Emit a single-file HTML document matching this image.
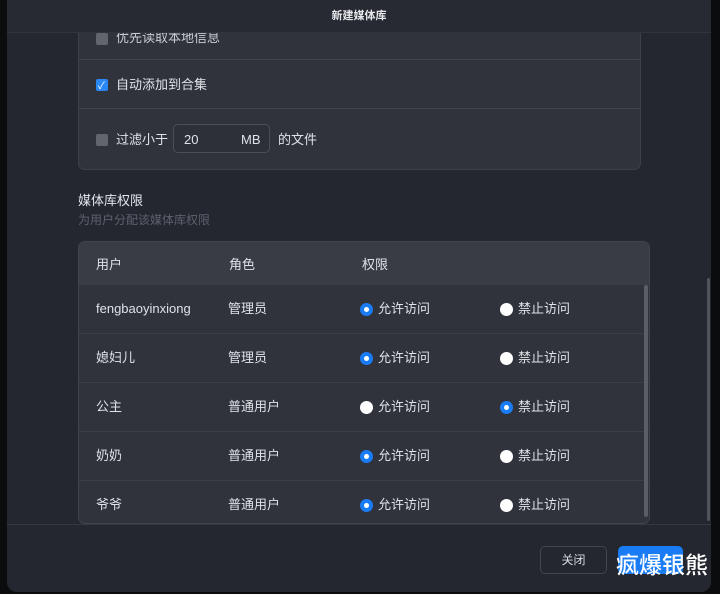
<!DOCTYPE html>
<html><head><meta charset="utf-8"><style>
*{box-sizing:border-box;margin:0;padding:0}
body{width:720px;height:594px;background:#0b0c0e;font-family:"Liberation Sans","Noto Sans CJK SC",sans-serif;color:#d8dbe0;font-size:13px;overflow:hidden;position:relative}
.modal{position:absolute;left:7px;top:0;width:704px;height:592px;background:#242730;border-radius:0 0 10px 10px;overflow:hidden}
.hdr{position:absolute;left:0;top:0;width:100%;height:33px;background:#272a32;border-bottom:1px solid #31343c;text-align:center;line-height:33px;font-size:11px;font-weight:bold;color:#e6e8eb;z-index:5}
.card{position:absolute;left:71px;background:#30333c;border:1px solid #3c4049;border-radius:0 0 7px 7px}
.row{position:absolute;left:0;width:100%;border-bottom:1px solid #41454e}
.cb{position:absolute;width:12px;height:12px;border-radius:2px;background:#62656d}
.cb.on{background:#2a87f5}
.t{position:absolute;font-size:13px;line-height:16px;color:#dfe2e6;white-space:nowrap}
.inp{position:absolute;left:94px;width:97px;height:29px;border:1px solid #4a4e57;border-radius:5px;background:#2d3038}
.tbl{position:absolute;left:71px;top:241px;width:572px;height:283px;background:#30333c;border:1px solid #40444d;border-radius:7px;overflow:hidden}
.th{position:absolute;left:0;top:0;width:100%;height:43px;background:#393c45}
.tr{position:absolute;left:0;width:100%;height:49px;border-bottom:1px solid #3b3f48}
.rd{position:absolute;width:13px;height:13px;border-radius:50%;background:#fff}
.rd.on{background:#1a7cf5}
.rd.on:after{content:"";position:absolute;left:4px;top:4px;width:5px;height:5px;border-radius:50%;background:#fff}
</style></head><body>
<div class="modal">
<div class="hdr">新建媒体库</div>
<div class="card" style="top:33px;width:563px;height:137px;border-top:none">
  <div class="row" style="top:-1px;height:28px"><div class="cb" style="left:17px;top:1px"></div><div class="t" style="left:37px;top:-2px;color:#c9ccd1">优先读取本地信息</div></div>
  <div class="row" style="top:27px;height:49px"><div class="cb on" style="left:17px;top:19px"></div><div style="position:absolute;left:19px;top:17px;color:#fff;font-size:10px">✓</div><div class="t" style="left:37px;top:17px">自动添加到合集</div></div>
  <div class="cb" style="left:17px;top:101px"></div><div class="t" style="left:37px;top:99px">过滤小于</div>
  <div class="inp" style="top:91px"><span class="t" style="left:10px;top:7px">20</span><span class="t" style="left:67px;top:7px">MB</span></div>
  <div class="t" style="left:199px;top:99px">的文件</div>
</div>
<div class="t" style="left:71px;top:193px;color:#e4e6ea">媒体库权限</div>
<div class="t" style="left:71px;top:212px;font-size:12px;color:#5d616a">为用户分配该媒体库权限</div>
<div class="tbl">
  <div class="th"><span class="t" style="left:17px;top:15px">用户</span><span class="t" style="left:150px;top:15px">角色</span><span class="t" style="left:283px;top:15px">权限</span></div>
  <div class="tr" style="top:43px"><span class="t" style="left:17px;top:16px">fengbaoyinxiong</span><span class="t" style="left:149px;top:16px">管理员</span><div class="rd on" style="left:281px;top:18px"></div><span class="t" style="left:299px;top:16px">允许访问</span><div class="rd" style="left:421px;top:18px"></div><span class="t" style="left:439px;top:16px">禁止访问</span></div>
  <div class="tr" style="top:92px"><span class="t" style="left:17px;top:16px">媳妇儿</span><span class="t" style="left:149px;top:16px">管理员</span><div class="rd on" style="left:281px;top:18px"></div><span class="t" style="left:299px;top:16px">允许访问</span><div class="rd" style="left:421px;top:18px"></div><span class="t" style="left:439px;top:16px">禁止访问</span></div>
  <div class="tr" style="top:141px"><span class="t" style="left:17px;top:16px">公主</span><span class="t" style="left:149px;top:16px">普通用户</span><div class="rd" style="left:281px;top:18px"></div><span class="t" style="left:299px;top:16px">允许访问</span><div class="rd on" style="left:421px;top:18px"></div><span class="t" style="left:439px;top:16px">禁止访问</span></div>
  <div class="tr" style="top:190px"><span class="t" style="left:17px;top:16px">奶奶</span><span class="t" style="left:149px;top:16px">普通用户</span><div class="rd on" style="left:281px;top:18px"></div><span class="t" style="left:299px;top:16px">允许访问</span><div class="rd" style="left:421px;top:18px"></div><span class="t" style="left:439px;top:16px">禁止访问</span></div>
  <div class="tr" style="top:239px;border:none"><span class="t" style="left:17px;top:16px">爷爷</span><span class="t" style="left:149px;top:16px">普通用户</span><div class="rd on" style="left:281px;top:18px"></div><span class="t" style="left:299px;top:16px">允许访问</span><div class="rd" style="left:421px;top:18px"></div><span class="t" style="left:439px;top:16px">禁止访问</span></div>
  <div style="position:absolute;left:565px;top:43px;width:4px;height:232px;background:#5b5e66;border-radius:2px"></div>
</div>
<div style="position:absolute;left:0;top:524px;width:100%;height:1px;background:#353841"></div>
<div style="position:absolute;left:700px;top:278px;width:3px;height:243px;background:#50535b;border-radius:2px"></div>
<div style="position:absolute;left:533px;top:546px;width:67px;height:28px;border:1px solid #41454e;border-radius:5px;text-align:center;line-height:26px;font-size:12px;color:#d8dbe0">关闭</div>
<div style="position:absolute;left:611px;top:546px;width:65px;height:28px;background:#1a7cf5;border-radius:5px"></div>
<div style="position:absolute;left:609px;top:551px;font-size:23px;line-height:28px;color:#fff;font-weight:500;white-space:nowrap">疯爆银熊</div>
</div>
</body></html>
